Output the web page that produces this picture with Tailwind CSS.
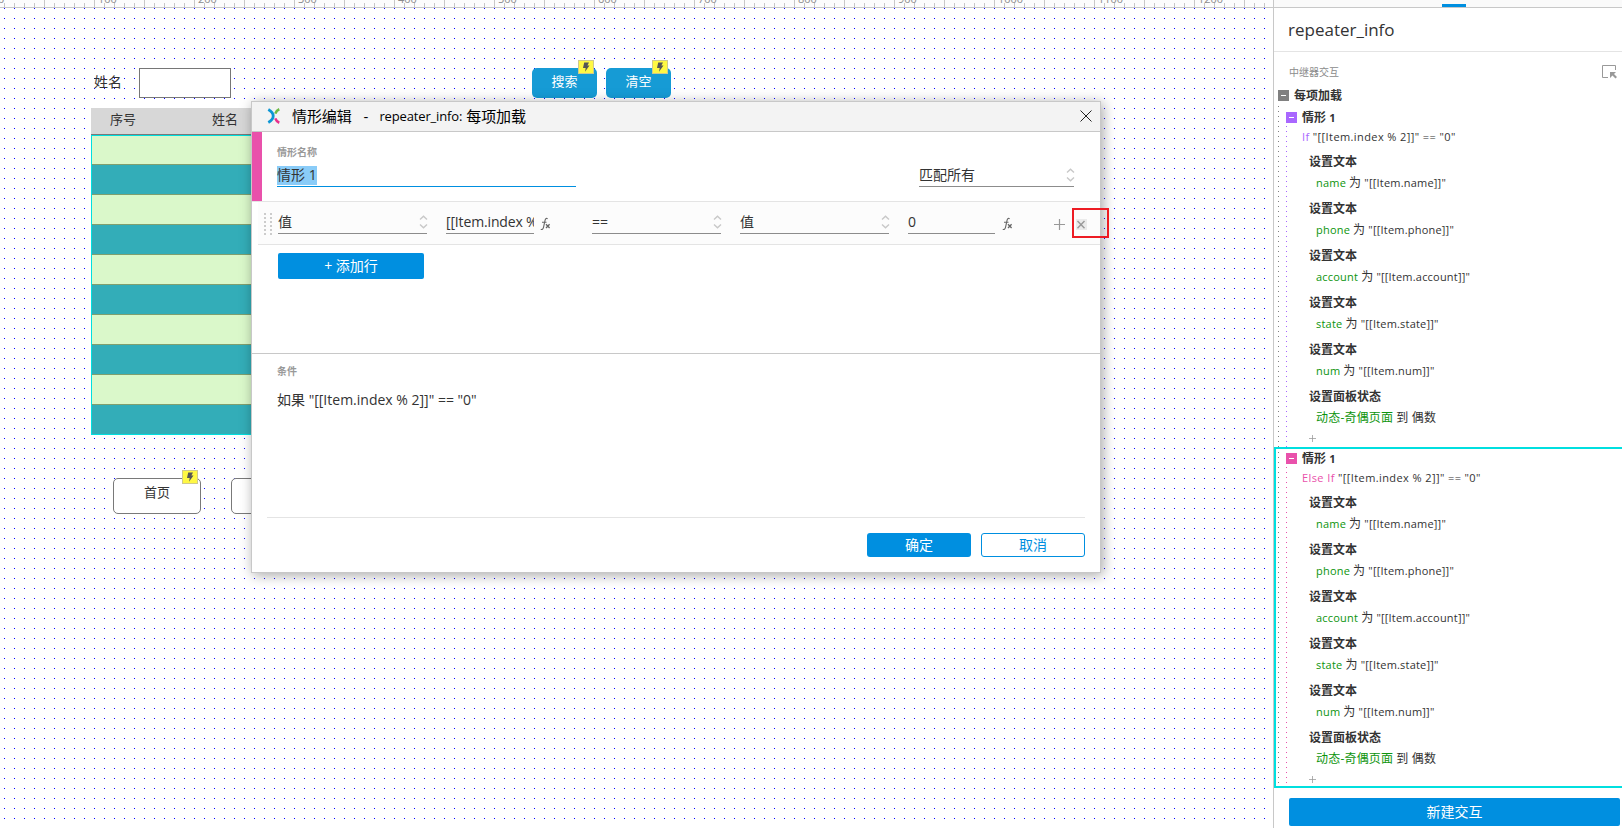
<!DOCTYPE html>
<html lang="zh-CN">
<head>
    <meta charset="UTF-8">
    <meta name="viewport" content="width=device-width, initial-scale=1.0">
    <title>情形编辑</title>
    <script src="https://cdn.jsdelivr.net/npm/@tailwindcss/browser@4"></script>
</head>
<body class="w-[1622px] h-[828px] overflow-hidden bg-white text-[#333] font-['Open_Sans','Noto_Sans_CJK_SC',sans-serif]">

    <!-- Shared icons -->
    <svg class="hidden">
        <symbol id="bolt" viewBox="0 0 8 10"><path d="M2.2 0.5H7L5.4 3.6H7.5L3 9.8L3.7 6H1Z" fill="#555"/></symbol>
        <symbol id="updown" viewBox="0 0 9 14"><path d="M1 4.5L4.5 1.2L8 4.5M1 9.5L4.5 12.8L8 9.5" fill="none" stroke="#c8c8c8" stroke-width="1.4"/></symbol>
        <symbol id="fx" viewBox="0 0 11 14"><path d="M7.6 1.9C6.6 0.9 5.5 1.4 5.1 3.2L3.5 10.4C3.1 12.2 2 12.9 0.8 12.2M2 5.2H6.5" fill="none" stroke="#666" stroke-width="1.1"/><path d="M6 7.2L9.6 11M9.6 7.2L6 11" fill="none" stroke="#666" stroke-width="1.3"/></symbol>
        <symbol id="plus" viewBox="0 0 11 11"><path d="M5.5 0V11M0 5.5H11" fill="none" stroke="#999" stroke-width="1.2"/></symbol>
    </svg>

    <div class="flex h-full">
        <!-- Canvas -->
        <main class="relative w-[1273px] h-full overflow-hidden">
            <div id="ruler" class="relative h-2 bg-[#fdfdfd] border-b border-[#c8c8c8] overflow-hidden"></div>
            <svg class="block w-[1273px] h-[820px]">
                <pattern id="grid" x="4" y="0" width="10" height="10" patternUnits="userSpaceOnUse"><rect width="1" height="1" fill="#0000ff"/></pattern>
                <rect width="1273" height="820" fill="url(#grid)"/>
            </svg>

            <span class="absolute left-[94px] top-[72px] text-sm leading-5">姓名</span>
            <div class="absolute left-[139px] top-[68px] w-[92px] h-[30px] bg-white border border-[#767676]"></div>

            <div class="absolute left-[532px] top-[68px] flex gap-[9px] text-white text-[13px]">
                <div class="relative w-[65px] h-[30px] rounded-[5px] bg-[#169bd5] flex items-center justify-center pb-0.5">搜索
                    <div class="absolute -top-2 right-[3px] w-4 h-3.5 bg-[#fff843] border border-[#cfc98c] flex items-center justify-center"><svg class="w-2 h-2.5"><use href="#bolt"/></svg></div>
                </div>
                <div class="relative w-[65px] h-[30px] rounded-[5px] bg-[#169bd5] flex items-center justify-center pb-0.5">清空
                    <div class="absolute -top-2 right-[3px] w-4 h-3.5 bg-[#fff843] border border-[#cfc98c] flex items-center justify-center"><svg class="w-2 h-2.5"><use href="#bolt"/></svg></div>
                </div>
            </div>

            <div class="absolute left-[91px] top-[108px] w-[400px]">
                <div class="h-[27px] bg-[#d7d7d7] border-b border-[#797979] flex items-center text-[13px] pb-0.5">
                    <span class="w-[102px] pl-[19px]">序号</span>
                    <span class="pl-[19px]">姓名</span>
                </div>
                <div id="rows" class="relative h-[300px]"></div>
            </div>

            <div class="absolute left-[113px] top-[478px] flex gap-[30px] text-[13px]">
                <div class="relative w-[88px] h-9 rounded-[5px] bg-white border border-[#797979] flex items-center justify-center pb-1.5">首页
                    <div class="absolute -top-[9px] right-0.5 w-4 h-3.5 bg-[#fff843] border border-[#cfc98c] flex items-center justify-center"><svg class="w-2 h-2.5"><use href="#bolt"/></svg></div>
                </div>
                <div class="w-[88px] h-9 rounded-[5px] bg-white border border-[#797979]"></div>
            </div>
        </main>

        <!-- Interactions panel -->
        <aside class="w-[349px] h-full border-l border-[#c8c8c8] bg-white">
            <div class="h-2 bg-[#fafafa] border-b border-[#c8c8c8] pl-[168px] pt-1"><div class="w-6 h-[3px] bg-[#008fe0]"></div></div>
            <div class="h-11 border-b border-[#e4e4e4] pl-3.5 flex items-center text-[17px]">repeater_info</div>
            <div class="h-[34px] pl-[15px] pr-[5px] pt-3 flex justify-between">
                <span class="text-[10px] leading-4 text-[#8c8c8c]">中继器交互</span>
                <svg class="mt-px w-[15px] h-[14px]" viewBox="0 0 15 14"><path d="M6 12.5H0.5V0.5H13.5V5" fill="none" stroke="#999"/><path d="M8 7H14L12 9L15 12L13.5 13.5L10.5 10.5L8 13Z" fill="#999"/></svg>
            </div>
            <div class="h-5 pl-1 pt-1 flex gap-[5px]">
                <div class="w-[11px] h-[11px] bg-[#808080] flex items-center justify-center"><i class="w-[5px] h-px bg-white"></i></div>
                <span class="text-xs leading-[11px] font-bold">每项加载</span>
            </div>
            <div id="cases" class="relative"></div>
            <div class="mt-2.5 ml-[15px] w-[331px] h-7 rounded-[2px] bg-[#008fe0] text-white text-sm flex items-center justify-center">新建交互</div>
        </aside>
    </div>

    <!-- Case editor dialog -->
    <div class="absolute left-[251px] top-[101px] w-[850px] h-[472px] border border-[#c8c8c8] bg-white shadow-[2px_2px_12px_rgba(0,0,0,0.35)]">
        <div class="h-[30px] bg-[#f3f3f3] border-b border-[#c8c8c8] flex items-center pl-[15px] pr-2 pb-px text-black">
            <svg class="w-[14px] h-4" viewBox="0 0 14 16"><path d="M1.3 1.5C4 3 6.2 5.5 6.2 8S4 13 1.3 14.5" fill="none" stroke="#0c96d4" stroke-width="2.8"/><path d="M12.3 1.2C10.3 2 9 3.6 8.3 5.6" fill="none" stroke="#6cbb45" stroke-width="2.6"/><path d="M8.3 10.4C9 12.4 10.3 14 12.3 14.8" fill="none" stroke="#e8308c" stroke-width="2.6"/></svg>
            <span class="ml-[11px] text-[15px] tracking-[-0.1px]">情形编辑</span>
            <span class="ml-3 text-[15px]">-</span>
            <span class="ml-[11px] pt-0.5 text-[13px] tracking-[-0.15px]">repeater_info:</span>
            <span class="ml-1 text-[15px] tracking-[-0.1px]">每项加载</span>
            <svg class="ml-auto w-3 h-3" viewBox="0 0 12 12"><path d="M0.5 0.5L11.5 11.5M11.5 0.5L0.5 11.5" fill="none" stroke="#222"/></svg>
        </div>

        <div class="h-[70px] border-b border-[#e4e4e4] flex">
            <div class="w-2.5 h-[69px] bg-[#e951ab]"></div>
            <div class="ml-[15px] pt-3 w-[299px]">
                <div class="h-4 text-[10px] leading-4 font-bold text-[#999]">情形名称</div>
                <div class="mt-1.5 h-[21px] border-b border-[#008fe0] text-sm leading-[17px]"><span class="inline-block h-[19px] bg-[#8accf8]">情形 1</span></div>
            </div>
            <div class="ml-[343px] mt-[34px] w-[155px] h-[21px] border-b border-[#8c8c8c] flex justify-between text-sm leading-[17px]">匹配所有<svg class="mt-0.5 -mr-px w-[9px] h-3.5"><use href="#updown"/></svg></div>
        </div>

        <div class="h-[43px] ml-1.5 border-b border-[#e4e4e4] bg-[#fcfcfc] flex pt-[11px]">
            <svg class="ml-[6px] w-2 h-[22px]" viewBox="0 0 8 22"><path d="M1 0V22M7 0V22" stroke="#ccc" stroke-width="2" stroke-dasharray="2 2"/></svg>
            <div class="ml-1.5 w-[149px] h-[21px] border-b border-[#8c8c8c] flex justify-between text-sm leading-[17px]">值<svg class="mt-0.5 -mr-px w-[9px] h-3.5"><use href="#updown"/></svg></div>
            <div class="ml-[19px] w-[88px] h-[21px] border-b border-[#8c8c8c] text-sm leading-[17px] tracking-[-0.15px] overflow-hidden whitespace-nowrap">[[Item.index % 2]]</div>
            <svg class="ml-[6px] mt-1 w-[11px] h-3.5"><use href="#fx"/></svg>
            <div class="ml-[41px] w-[129px] h-[21px] border-b border-[#8c8c8c] flex justify-between text-sm leading-[17px]">==<svg class="mt-0.5 -mr-px w-[9px] h-3.5"><use href="#updown"/></svg></div>
            <div class="ml-[19px] w-[149px] h-[21px] border-b border-[#8c8c8c] flex justify-between text-sm leading-[17px]">值<svg class="mt-0.5 -mr-px w-[9px] h-3.5"><use href="#updown"/></svg></div>
            <div class="ml-[19px] w-[87px] h-[21px] border-b border-[#8c8c8c] text-sm leading-[17px]">0</div>
            <svg class="ml-[7px] mt-1 w-[11px] h-3.5"><use href="#fx"/></svg>
            <svg class="ml-[41px] mt-1.5 w-[11px] h-[11px]"><use href="#plus"/></svg>
            <div class="ml-[11px] mt-1.5 w-[11px] h-[11px] bg-[#ebebeb]"><svg class="w-[11px] h-[11px]" viewBox="0 0 11 11"><path d="M1.5 2L8.5 9.3M8.5 2L1.5 9.3" stroke="#999" stroke-width="1.4"/></svg></div>
        </div>

        <div class="h-[109px] border-b border-[#c8c8c8] pl-[26px] pt-2">
            <div class="w-[146px] h-[26px] rounded-[2px] bg-[#008fe0] text-white text-sm flex items-center justify-center">+ 添加行</div>
        </div>

        <div class="mx-[15px] h-[164px] border-b border-[#e4e4e4] pt-[9px]">
            <div class="pl-2.5 h-4 text-[10px] leading-4 font-bold text-[#999]">条件</div>
            <div class="pl-2.5 mt-[11px] text-sm leading-5">如果 "[[Item.index % 2]]" == "0"</div>
        </div>
        <div class="mr-[15px] pt-[15px] flex justify-end gap-2.5 text-sm">
            <div class="w-[104px] h-6 rounded-[3px] bg-[#008fe0] text-white flex items-center justify-center">确定</div>
            <div class="w-[104px] h-6 rounded-[3px] border border-[#008fe0] text-[#008fe0] flex items-center justify-center">取消</div>
        </div>
    </div>

    <!-- Highlight over the delete button -->
    <div class="absolute left-[1072px] top-[208px] w-[37px] h-[30px] border-2 border-[#ed1c24]"></div>

    <script>
        // Ruler: 10px ticks, every 50px a full one, a number every 100px
        let ruler = '';
        for (let x = 4; x < 1273; x += 10) {
            const big = (x + 6) % 50 === 0;
            ruler += `<i class="absolute bottom-0 w-px bg-[#c8c8c8] ${big ? 'h-2' : 'h-1'}" style="left:${x}px"></i>`;
        }
        for (let n = 0; n <= 1200; n += 100) {
            ruler += `<span class="absolute -top-[7px] text-[11px] leading-3 text-[#8c8c8c]" style="left:${n - 2}px">${n}</span>`;
        }
        document.getElementById('ruler').innerHTML = ruler;

        document.getElementById('rows').innerHTML = Array.from({ length: 10 }, (_, i) =>
            `<div class="h-[30px] border-b border-[#7f9f6f] ${i % 2 ? 'bg-[#33adb8]' : 'bg-[#daf8ca]'}"></div>`
        ).join('') + '<div class="absolute inset-0 border border-[#00dfdf]"></div>';

        const fields = ['name', 'phone', 'account', 'state', 'num'];
        const action = (title, target, rest) => `
            <div class="h-[47px] pl-[35px] text-xs">
                <div class="h-6 pt-px leading-6 font-bold">${title}</div>
                <div class="h-5 pl-[7px] leading-5 text-[11px] whitespace-pre tracking-[0.2px]"><span class="text-[#0c940c]">${target}</span> ${rest}</div>
            </div>`;
        const actions = fields.map(f => action('设置文本', f, `<span class="text-xs">为</span> "[[Item.${f}]]"`)).join('')
            + action('设置面板状态', '<span class="text-xs">动态-奇偶页面</span>', '<span class="text-xs">到 偶数</span>');

        const cases = [
            { word: 'If', box: 'bg-[#a967ff]', text: 'text-[#a967ff]', dots: '#a967ff', frame: '' },
            { word: 'Else If', box: 'bg-[#e951ab]', text: 'text-[#e951ab]', dots: '#e951ab', frame: '<div class="absolute top-0 left-0 w-[360px] h-[341px] border-2 border-[#00dfdf]"></div>' }
        ];
        document.getElementById('cases').innerHTML = cases.map(c => `
            <div class="relative h-[341px]">
                <svg class="absolute left-0 top-0 w-8 h-[341px]">
                    <path d="M4.5 0V341" stroke="#808080" stroke-dasharray="1 4"/>
                    <path d="M12.5 20V341" stroke="${c.dots}" stroke-dasharray="1 4"/>
                </svg>
                ${c.frame}
                <div class="relative h-[23px] pl-3 pt-1.5 flex gap-[5px]">
                    <div class="w-[11px] h-[11px] flex items-center justify-center ${c.box}"><i class="w-[5px] h-px bg-white"></i></div>
                    <span class="text-xs leading-[11px] font-bold">情形 <span class="text-[11px]">1</span></span>
                </div>
                <div class="h-4 mb-1 pl-7 text-[11px] leading-4 tracking-[0.4px]"><span class="${c.text}">${c.word}</span> "[[Item.index % 2]]" == "0"</div>
                ${actions}
                <div class="h-4 pl-[35px] pt-1"><svg class="w-[7px] h-[7px]"><use href="#plus"/></svg></div>
            </div>`).join('');
    </script>

</body>
</html>
